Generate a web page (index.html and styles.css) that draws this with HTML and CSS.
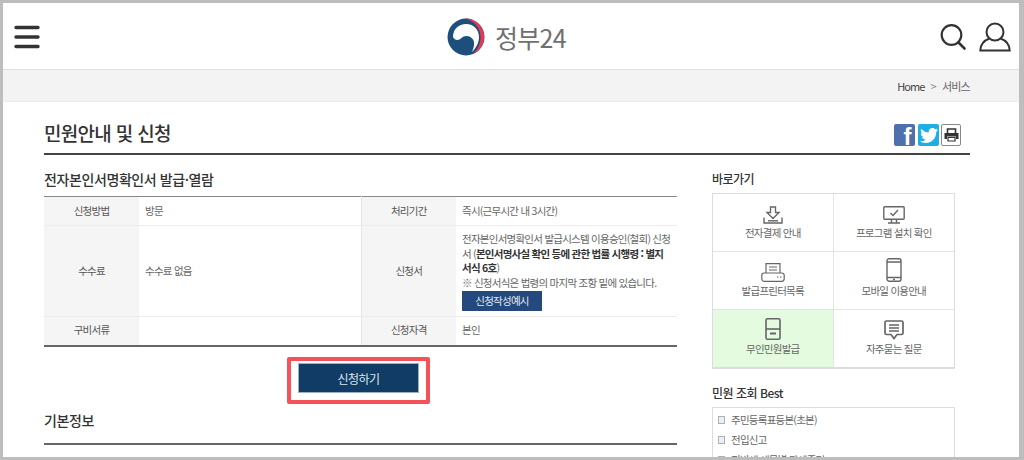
FILE: index.html
```html
<!DOCTYPE html>
<html lang="ko">
<head>
    <meta charset="utf-8">
    <title>민원안내 및 신청</title>
    <link rel="stylesheet" href="styles.css">
</head>
<body>
<div class="frame">

    <header class="top">
        <svg class="menu" width="26" height="24" viewBox="0 0 26 24">
            <path d="M2 2.500H24M2 12H24M2 21.500H24" stroke="#333" stroke-width="3.400" stroke-linecap="round"/>
        </svg>
        <div class="logo">
            <svg width="38" height="40" viewBox="0 0 38 40">
                <circle cx="19" cy="20" r="18.500" fill="#1d4f7c"/>
                <path d="M17 1.600A18.500 18.500 0 0 1 26 37C31 32 34 26 33.500 19C33 10 26 3 17 1.600Z" fill="#e9384f"/>
                <path d="M6 20C6 12 12 7 19 7C27 7 32 13 32 20C32 26 29 31 25 35C27 30 28 26 26 22.500C23 18 17 18 14.500 21C12 23.500 8 24 6 20Z" fill="#fff"/>
            </svg>
            <span class="logo-text">정부24</span>
        </div>
        <div class="top-icons">
            <svg width="26" height="28" viewBox="0 0 26 28">
                <circle cx="11.500" cy="12" r="9.800" fill="none" stroke="#333" stroke-width="2.200"/>
                <path d="M18.500 19.500L24.500 25.500" stroke="#333" stroke-width="2.600" stroke-linecap="round"/>
            </svg>
            <svg width="32" height="30" viewBox="0 0 32 30">
                <circle cx="16" cy="10" r="8.500" fill="none" stroke="#333" stroke-width="2"/>
                <path d="M10.500 16.500C5 18.500 1.500 22.500 1.300 28.500H30.700C30.500 22.500 27 18.500 21.500 16.500" fill="none" stroke="#333" stroke-width="2"/>
            </svg>
        </div>
    </header>

    <div class="crumb">
        <span class="crumb-home">Home</span>
        <span class="crumb-sep">&gt;</span>
        <span class="crumb-now">서비스</span>
    </div>

    <main class="page">
        <div class="title-row">
            <h1>민원안내 및 신청</h1>
            <div class="share">
                <span class="share-btn fb">f</span>
                <span class="share-btn tw">
                    <svg width="18" height="15" viewBox="0 0 18 15">
                        <path d="M18 1.800C17.300 2.100 16.600 2.300 15.900 2.400C16.600 2 17.200 1.300 17.400.4C16.700.8 15.900 1.100 15.100 1.300C14.400.5 13.500 0 12.400 0C10.400 0 8.700 1.700 8.700 3.700C8.700 4 8.800 4.300 8.800 4.500C5.800 4.400 3.100 2.900 1.300.7C1 1.300.8 1.900.8 2.600C.8 3.900 1.400 5 2.400 5.700C1.800 5.700 1.200 5.500.8 5.300C.8 7.100 2 8.600 3.700 9C3.100 9.100 2.600 9.200 2 9.100C2.500 10.600 3.800 11.600 5.400 11.700C3.800 12.900 1.900 13.500 0 13.300C1.700 14.400 3.600 15 5.700 15C12.500 15 16.200 9.400 16.200 4.500V4C16.900 3.500 17.500 2.700 18 1.800Z" fill="#fff"/>
                    </svg>
                </span>
                <span class="share-btn pr">
                    <svg width="15" height="14" viewBox="0 0 15 14">
                        <path d="M3.500 5V1H11.500V5" fill="none" stroke="#333" stroke-width="1.600"/>
                        <path d="M0.500 5H14.500V11H12V8.500H3V11H0.500Z" fill="#333"/>
                        <path d="M4 9.500H11V13H4Z" fill="#fff" stroke="#333" stroke-width="1.200"/>
                    </svg>
                </span>
            </div>
        </div>

        <div class="columns">
            <div class="main-col">
                <h2 class="doc-title">전자본인서명확인서 발급·열람</h2>
                <table class="info">
                    <colgroup>
                        <col class="c-th"><col class="c-td1"><col class="c-th"><col class="c-td2">
                    </colgroup>
                    <tr class="r-short">
                        <th>신청방법</th>
                        <td>방문</td>
                        <th>처리기간</th>
                        <td>즉시(근무시간 내 3시간)</td>
                    </tr>
                    <tr>
                        <th>수수료</th>
                        <td>수수료 없음</td>
                        <th>신청서</th>
                        <td class="form-cell">
                            전자본인서명확인서 발급시스템 이용승인(철회) 신청서 (<b>본인서명사실 확인 등에 관한 법률 시행령 : 별지 서식 6호</b>)<br>
                            ※ 신청서식은 법령의 마지막 조항 밑에 있습니다.<br>
                            <span class="example-btn">신청작성예시</span>
                        </td>
                    </tr>
                    <tr class="r-short">
                        <th>구비서류</th>
                        <td></td>
                        <th>신청자격</th>
                        <td>본인</td>
                    </tr>
                </table>

                <div class="apply-row">
                    <div class="mark">
                        <span class="apply-btn">신청하기</span>
                    </div>
                </div>

                <h2 class="basic-title">기본정보</h2>
            </div>

            <aside class="side">
                <h3>바로가기</h3>
                <div class="quick">
                    <div class="quick-item">
                        <svg width="20" height="18" viewBox="0 0 20 18" fill="none" stroke="#666" stroke-width="1.400">
                            <path d="M7.500 1H12.500V6.500H16L10 12.500L4 6.500H7.500Z"/>
                            <path d="M1 11.500V17H19V11.500"/>
                            <path d="M5 14.800H15"/>
                        </svg>
                        <span>전자결제 안내</span>
                    </div>
                    <div class="quick-item">
                        <svg width="22" height="18" viewBox="0 0 22 18" fill="none" stroke="#666" stroke-width="1.400">
                            <rect x=".8" y=".8" width="20.400" height="12.500" rx="1"/>
                            <path d="M7.500 7L10 9.500L15 4"/>
                            <path d="M8.500 13.500V16.500M13.500 13.500V16.500M5 17H17"/>
                        </svg>
                        <span>프로그램 설치 확인</span>
                    </div>
                    <div class="quick-item">
                        <svg width="24" height="19" viewBox="0 0 24 19" fill="none" stroke="#666" stroke-width="1.200">
                            <path d="M5 10V.7H19V10"/>
                            <path d="M8 4H16M8 7H16"/>
                            <rect x=".8" y="10" width="22.400" height="8.300" rx="2.500"/>
                            <path d="M16 14H17.500M19 14H20.500"/>
                        </svg>
                        <span>발급프린터목록</span>
                    </div>
                    <div class="quick-item">
                        <svg width="16" height="24" viewBox="0 0 16 24" fill="none" stroke="#666" stroke-width="1.400">
                            <rect x="1" y=".8" width="14" height="22.400" rx="2"/>
                            <path d="M1 4H15M1 19.500H15"/>
                            <path d="M7 21.500H9"/>
                        </svg>
                        <span>모바일 이용안내</span>
                    </div>
                    <div class="quick-item on">
                        <svg width="16" height="22" viewBox="0 0 16 22" fill="none" stroke="#666" stroke-width="1.600">
                            <rect x="1" y=".8" width="14" height="20.400" rx="1.500"/>
                            <path d="M1 11H15"/>
                            <path d="M5 15.500H11" stroke-width="2"/>
                        </svg>
                        <span>무인민원발급</span>
                    </div>
                    <div class="quick-item">
                        <svg width="20" height="20" viewBox="0 0 20 20" fill="none" stroke="#666" stroke-width="1.700">
                            <path d="M2.500 1H17.500Q19 1 19 2.500V13Q19 14.500 17.500 14.500H13L10 18.500L7 14.500H2.500Q1 14.500 1 13V2.500Q1 1 2.500 1Z"/>
                            <path d="M5 5H15M5 8H15M5 11H15" stroke-width="1.300"/>
                        </svg>
                        <span>자주묻는 질문</span>
                    </div>
                </div>

                <h3 class="best-title">민원 조회 Best</h3>
                <ul class="best">
                    <li>주민등록표등본(초본)</li>
                    <li>전입신고</li>
                    <li>지방세 세목별 과세증명</li>
                </ul>
            </aside>
        </div>
    </main>

</div>
</body>
</html>
```

FILE: styles.css
```css
html, body {
    margin: 0;
    padding: 0;
    height: 460px;
    overflow: hidden;
    background: #fff;
}

body {
    font-family: "Noto Sans CJK KR", "Noto Sans", sans-serif;
    color: #555;
    font-size: 10.5px;
    letter-spacing: -0.75px;
}

.frame {
    box-sizing: border-box;
    width: 1024px;
    height: 460px;
    overflow: hidden;
    border: solid #bdbdbd;
    border-width: 3px 5px 3px 3px;
}

/* header */
.top {
    display: grid;
    grid-template-columns: 1fr auto 1fr;
    align-items: center;
    height: 67px;
    box-sizing: border-box;
    padding: 2px 8px 0 11px;
    border-bottom: 1px solid #d9e1e8;
}

.logo {
    display: flex;
    align-items: center;
    gap: 10px;
    margin-right: 12px;
}

.logo-text {
    font-size: 25px;
    font-weight: 400;
    line-height: 30px;
    letter-spacing: -0.7px;
    color: #707070;
}

.top-icons {
    display: flex;
    justify-content: flex-end;
    align-items: center;
    gap: 13px;
}

.crumb {
    display: flex;
    justify-content: flex-end;
    align-items: center;
    gap: 6px;
    height: 32px;
    padding-right: 49px;
    background: #f4f3f4;
    border-bottom: 1px solid #ececec;
    box-sizing: border-box;
    color: #444;
    font-size: 11px;
}

.crumb-home {
    letter-spacing: -0.9px;
}

.crumb-sep {
    color: #888;
}

.crumb-now {
    color: #666;
}

/* content */
.page {
    margin: 0 49px 0 41px;
}

.title-row {
    display: flex;
    justify-content: space-between;
    align-items: flex-end;
    height: 45px;
    border-bottom: 2px solid #444;
    padding-bottom: 6px;
}

h1 {
    margin: 0;
    font-size: 19px;
    line-height: 28px;
    font-weight: 500;
    color: #333;
    letter-spacing: -0.7px;
}

.share {
    display: flex;
    gap: 3px;
    margin: 0 9px 1px 0;
}

.share-btn {
    display: flex;
    align-items: center;
    justify-content: center;
    width: 21px;
    height: 22px;
    border-radius: 2px;
    box-sizing: border-box;
}

.fb {
    background: #4f70ad;
    color: #fff;
    font: bold 24px/22px "Liberation Sans", sans-serif;
    padding-left: 5px;
    padding-top: 4px;
}

.tw {
    background: #1eaee4;
}

.pr {
    width: 20px;
    margin-left: -1px;
    border: 1px solid #888;
    background: #fff;
}

.columns {
    display: flex;
}

.main-col {
    width: 633px;
}

.doc-title {
    margin: 0;
    padding-top: 13px;
    height: 28px;
    font-size: 14px;
    line-height: 22px;
    font-weight: 500;
    color: #333;
    letter-spacing: -0.4px;
}

.info {
    width: 633px;
    table-layout: fixed;
    border-collapse: collapse;
    border-top: 1px solid #888;
    border-bottom: 2px solid #666;
    line-height: 14.7px;
}

.c-th {
    width: 95px;
}

.c-td1 {
    width: 222px;
}

.c-td2 {
    width: 221px;
}

.info th {
    font-weight: 400;
    background: #f5f5f5;
    color: #555;
    text-align: center;
    padding: 0;
    border-bottom: 1px solid #ececec;
}

.info td {
    padding: 0 5px 0 6px;
    color: #666;
    border-bottom: 1px solid #ececec;
    border-right: 1px solid #e4e4e4;
}

.info td:last-child {
    border-right: 0;
}

.info tr:last-child th, .info tr:last-child td {
    border-bottom: 0;
}

.r-short th, .r-short td {
    height: 28px;
}

.info b {
    color: #333;
}

.info .form-cell {
    padding-top: 6px;
    padding-bottom: 5px;
}

.example-btn {
    display: inline-block;
    width: 80px;
    height: 20px;
    line-height: 20px;
    text-align: center;
    color: #e6ebf2;
    background: #23497f;
    vertical-align: top;
}

.apply-row {
    display: flex;
    justify-content: center;
    margin: 10px 4px 0 0;
}

.mark {
    border: 4px solid #f5515a;
    border-radius: 2px;
    padding: 2px 7px 7px;
}

.apply-btn {
    display: block;
    width: 121px;
    height: 30px;
    line-height: 30px;
    text-align: center;
    font-size: 12px;
    letter-spacing: -0.5px;
    color: #dfe6ee;
    background: #113c66;
    border: 1px solid #9fb0c2;
    box-sizing: border-box;
}

.basic-title {
    margin: 5px 0 0;
    height: 34px;
    line-height: 22px;
    font-size: 14px;
    font-weight: 500;
    letter-spacing: -0.4px;
    color: #333;
    border-bottom: 2px solid #666;
}

/* sidebar */
.side {
    width: 243px;
    margin-left: 35px;
}

.side h3 {
    margin: 0;
    padding-top: 15px;
    height: 23px;
    font-size: 12px;
    line-height: 17px;
    font-weight: 500;
    letter-spacing: -0.5px;
    color: #333;
}

.quick {
    display: grid;
    grid-template-columns: 1fr 1fr;
    grid-template-rows: 58px 58px 57px;
    border: 1px solid #dcdcdc;
    border-bottom-width: 2px;
}

.quick-item {
    display: flex;
    flex-direction: column;
    align-items: center;
    justify-content: flex-end;
    gap: 1px;
    padding-bottom: 10px;
    box-sizing: border-box;
    color: #666;
    line-height: 16px;
    border-bottom: 1px solid #e4e4e4;
    border-right: 1px solid #e4e4e4;
}

.quick-item:nth-child(2n) {
    border-right: 0;
}

.quick-item:nth-last-child(-n+2) {
    border-bottom: 0;
}

.quick-item.on {
    background: #e4fbe0;
}

.side h3.best-title {
    padding-top: 15px;
    height: 23px;
}

.best {
    list-style: none;
    margin: 0;
    padding: 2px 0 0 5px;
    border: 1px solid #dcdcdc;
    height: 60px;
    color: #666;
}

.best li {
    line-height: 20px;
}

.best li::before {
    content: "";
    display: inline-block;
    box-sizing: border-box;
    width: 7px;
    height: 8px;
    margin-right: 6px;
    border: 1px solid #a9b2bb;
    background: #eceef0;
}
```
